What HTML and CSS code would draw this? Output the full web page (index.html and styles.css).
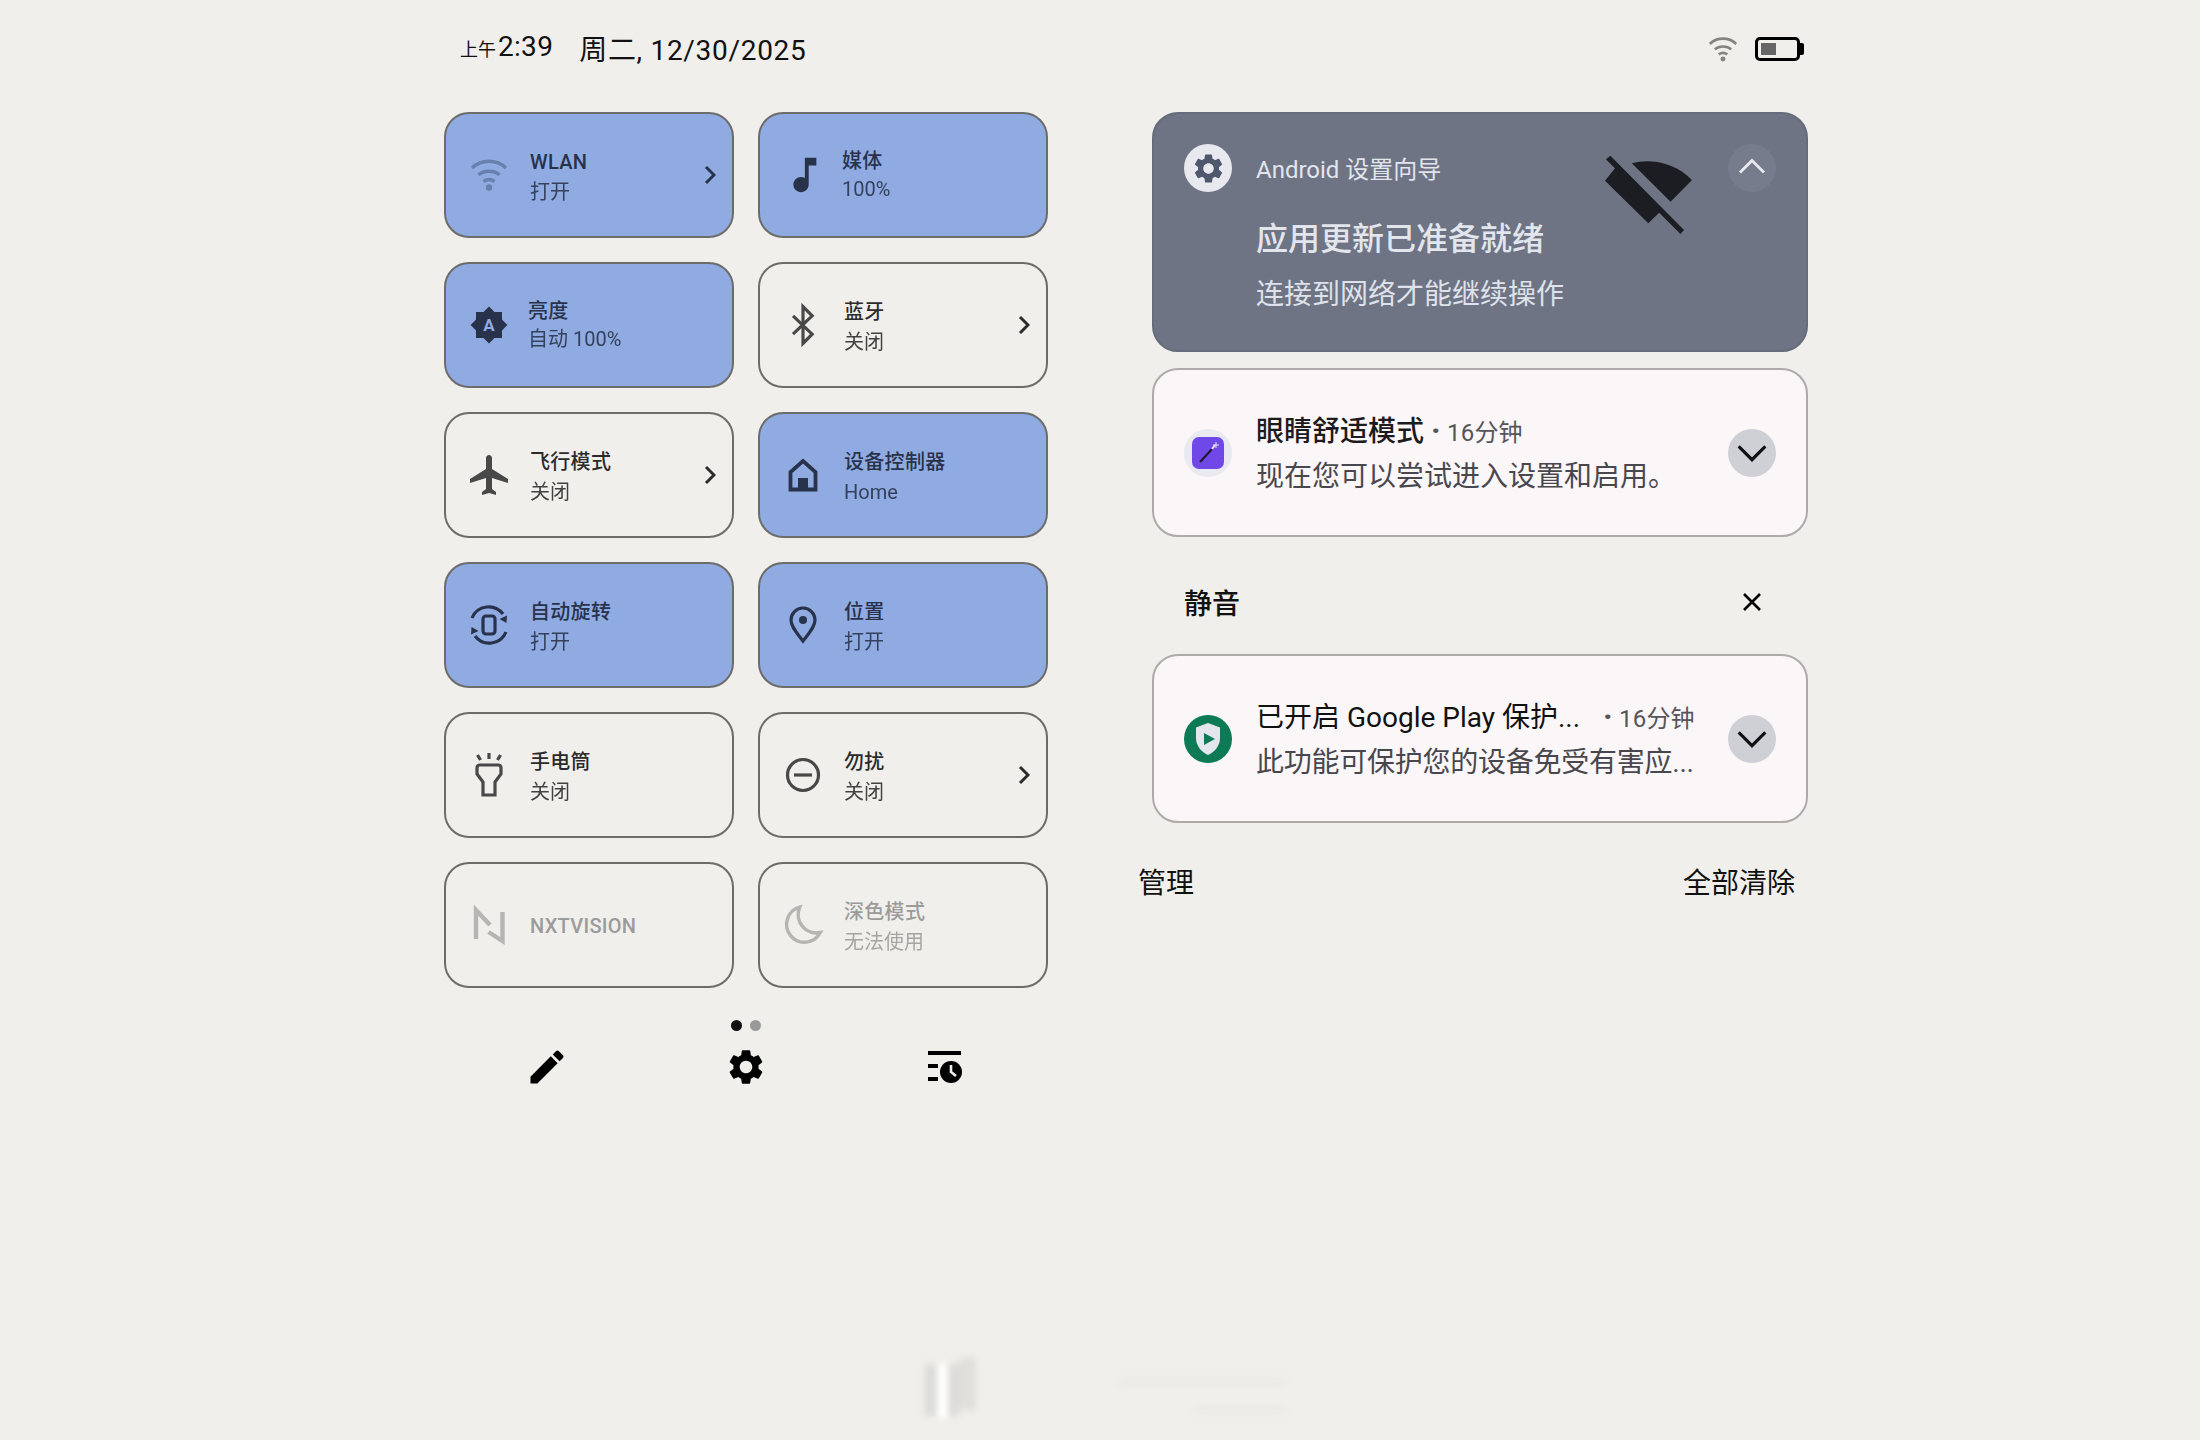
FILE: index.html
```html
<!DOCTYPE html>
<html lang="zh-CN">
<head>
    <meta charset="UTF-8">
    <meta name="viewport" content="width=device-width, initial-scale=1.0">
    <link rel="stylesheet" href="styles.css">
    <title>快速设置</title>
</head>
<body>

<svg class="defs" width="0" height="0">
    <defs>
        <path id="gear" d="M19.14 12.94c.04-.3.06-.61.06-.94 0-.32-.02-.64-.07-.94l2.03-1.58c.18-.14.23-.41.12-.61l-1.92-3.32c-.12-.22-.37-.29-.59-.22l-2.39.96c-.5-.38-1.03-.7-1.62-.94l-.36-2.54c-.04-.24-.24-.41-.48-.41h-3.84c-.24 0-.43.17-.47.41l-.36 2.54c-.59.24-1.13.57-1.62.94l-2.39-.96c-.22-.08-.47 0-.59.22L2.74 8.87c-.12.21-.08.47.12.61l2.03 1.58c-.05.3-.09.63-.09.94s.02.64.07.94l-2.03 1.58c-.18.14-.23.41-.12.61l1.92 3.32c.12.22.37.29.59.22l2.39-.96c.5.38 1.03.7 1.62.94l.36 2.54c.05.24.24.41.48.41h3.84c.24 0 .44-.17.47-.41l.36-2.54c.59-.24 1.13-.56 1.62-.94l2.39.96c.22.08.47 0 .59-.22l1.92-3.32c.12-.22.07-.47-.12-.61l-2.01-1.58zM12 15.6c-1.98 0-3.6-1.62-3.6-3.6s1.62-3.6 3.6-3.6 3.6 1.62 3.6 3.6-1.62 3.6-3.6 3.6z"/>
        <g id="wifi">
            <path d="M1 10C10.500 1 25.500 1 35 10"/>
            <path d="M7.500 17C13 12 23 12 28.500 17"/>
            <path d="M12.500 23.500C16 21 20 21 23.500 23.500"/>
            <circle cx="18" cy="29.500" r="3.200" fill="currentColor" stroke="none"/>
        </g>
    </defs>
</svg>

<div class="screen">
    <header class="status">
        <div class="clock">
            <span class="clock-ampm">上午</span><span class="clock-time">2:39</span>
            <span class="clock-date">周二, 12/30/2025</span>
        </div>
        <div class="status-icons">
            <svg class="status-wifi" viewBox="0 0 36 33"><use href="#wifi"/></svg>
            <div class="battery"><div class="battery-level"></div></div>
        </div>
    </header>

    <main class="columns">
        <section class="qs">
            <div class="tiles">
                <div class="tile on">
                    <svg class="tile-icon wifi-dim" viewBox="-2 -3 40 40"><use href="#wifi"/></svg>
                    <div class="tile-text"><div class="tile-title">WLAN</div><div class="tile-sub">打开</div></div>
                    <svg class="tile-more" viewBox="0 0 12 20"><path d="M2 2l8 8-8 8"/></svg>
                </div>
                <div class="tile on tight">
                    <svg class="tile-icon" viewBox="0.6 1.56 20.87 20.87"><path class="solid" d="M12 3v10.55c-.59-.34-1.27-.55-2-.55-2.21 0-4 1.79-4 4s1.79 4 4 4 4-1.79 4-4V7h4V3h-6z"/></svg>
                    <div class="tile-text"><div class="tile-title">媒体</div><div class="tile-sub">100%</div></div>
                </div>
                <div class="tile on tight">
                    <svg class="tile-icon" viewBox="0 0 40 40">
                        <rect class="solid" x="7" y="7" width="26" height="26"/>
                        <rect class="solid" x="7" y="7" width="26" height="26" transform="rotate(45 20 20)"/>
                        <text class="auto-a" x="20" y="26" text-anchor="middle">A</text>
                    </svg>
                    <div class="tile-text"><div class="tile-title">亮度</div><div class="tile-sub">自动 100%</div></div>
                </div>
                <div class="tile">
                    <svg class="tile-icon" viewBox="0 0 24 24"><path class="line" d="M6 6.5l11.5 11L12 23V1l5.500 5.500L6 17.500"/></svg>
                    <div class="tile-text"><div class="tile-title">蓝牙</div><div class="tile-sub">关闭</div></div>
                    <svg class="tile-more" viewBox="0 0 12 20"><path d="M2 2l8 8-8 8"/></svg>
                </div>
                <div class="tile">
                    <svg class="tile-icon" viewBox="1.500 2 20 20"><path class="solid" d="M21 16v-2l-8-5V3.500c0-.83-.67-1.500-1.500-1.500S10 2.670 10 3.500V9l-8 5v2l8-2.500V19l-2 1.500V22l3.500-1 3.500 1v-1.500L13 19v-5.500l8 2.500z"/></svg>
                    <div class="tile-text"><div class="tile-title">飞行模式</div><div class="tile-sub">关闭</div></div>
                    <svg class="tile-more" viewBox="0 0 12 20"><path d="M2 2l8 8-8 8"/></svg>
                </div>
                <div class="tile on">
                    <svg class="tile-icon" viewBox="0 0 40 40">
                        <path class="line home-line" d="M7.500 34.500V17L20 6l12.500 11v17.500z"/>
                        <rect class="solid" x="15" y="23" width="10" height="11"/>
                    </svg>
                    <div class="tile-text"><div class="tile-title">设备控制器</div><div class="tile-sub">Home</div></div>
                </div>
                <div class="tile on">
                    <svg class="tile-icon" viewBox="0 0 40 40">
                        <rect class="line" x="14" y="11" width="12" height="18" rx="3"/>
                        <path class="line" d="M3 13A18 18 0 0 1 34 9"/>
                        <path class="solid" d="M38 10.500L37.500 18l-7-4z"/>
                        <g transform="rotate(180 20 20)">
                            <path class="line" d="M3 13A18 18 0 0 1 34 9"/>
                            <path class="solid" d="M38 10.500L37.500 18l-7-4z"/>
                        </g>
                    </svg>
                    <div class="tile-text"><div class="tile-title">自动旋转</div><div class="tile-sub">打开</div></div>
                </div>
                <div class="tile on">
                    <svg class="tile-icon" viewBox="0 0 40 40">
                        <path class="line" d="M20 36C14 28 8 22 8 15a12 12 0 0 1 24 0c0 7-6 13-12 21z"/>
                        <circle class="solid" cx="20" cy="15" r="4"/>
                    </svg>
                    <div class="tile-text"><div class="tile-title">位置</div><div class="tile-sub">打开</div></div>
                </div>
                <div class="tile">
                    <svg class="tile-icon" viewBox="0 0 40 40">
                        <path class="line" d="M8 13q0-3 3-3h18q3 0 3 3v6l-6 8v13H14V27l-6-8z"/>
                        <path class="line" d="M20 -2v6M8.500 0l3 5M31.500 0l-3 5"/>
                    </svg>
                    <div class="tile-text"><div class="tile-title">手电筒</div><div class="tile-sub">关闭</div></div>
                </div>
                <div class="tile">
                    <svg class="tile-icon" viewBox="0 0 40 40">
                        <circle class="line" cx="20" cy="20" r="15.500"/>
                        <path class="line" d="M11 20h18"/>
                    </svg>
                    <div class="tile-text"><div class="tile-title">勿扰</div><div class="tile-sub">关闭</div></div>
                    <svg class="tile-more" viewBox="0 0 12 20"><path d="M2 2l8 8-8 8"/></svg>
                </div>
                <div class="tile off">
                    <svg class="tile-icon" viewBox="0 0 40 40">
                        <path class="line n-line" d="M7 34V5l14 15M33.500 7v29l-14-9"/>
                    </svg>
                    <div class="tile-text single"><div class="tile-title">NXTVISION</div></div>
                </div>
                <div class="tile off">
                    <svg class="tile-icon" viewBox="2.500 1.500 37 37">
                        <path class="line" d="M18 3.500A16.500 16.500 0 1 0 37 27 17 17 0 0 1 18 3.500z"/>
                    </svg>
                    <div class="tile-text"><div class="tile-title">深色模式</div><div class="tile-sub">无法使用</div></div>
                </div>
            </div>

            <div class="pager"><span class="dot active"></span><span class="dot"></span></div>

            <div class="qs-actions">
                <svg class="qs-action" viewBox="0 0 24 24"><path d="M3 17.250V21h3.750L17.810 9.940l-3.750-3.750L3 17.250zM20.710 7.040c.39-.39.39-1.020 0-1.410l-2.340-2.340c-.39-.39-1.020-.39-1.410 0l-1.830 1.830 3.750 3.750 1.830-1.830z"/></svg>
                <svg class="qs-action gear-action" viewBox="0 0 24 24"><use href="#gear"/></svg>
                <svg class="qs-action history-action" viewBox="0 0 36 36">
                    <path d="M1 2h33v4H1zM1 15h10v4H1zM1 28h10v4H1z"/>
                    <circle cx="24" cy="23" r="11"/>
                    <path class="clock-hands" d="M24 16v7l5 4"/>
                </svg>
            </div>
        </section>

        <section class="notifications">
            <article class="notif notif-alert">
                <div class="app-icon alert-icon"><svg viewBox="0 0 24 24"><use href="#gear"/></svg></div>
                <div class="alert-body">
                    <div class="alert-app">Android 设置向导</div>
                    <div class="alert-title">应用更新已准备就绪</div>
                    <div class="alert-text">连接到网络才能继续操作</div>
                </div>
                <div class="expand expand-up"><svg viewBox="0 0 24 24"><path d="M4 15l8-8 8 8"/></svg></div>
                <svg class="no-wifi" viewBox="0 0 88 80">
                    <path d="M5.400 .7L79 75l-3.600 4L.9 4.300z"/>
                    <path d="M11 12L0 25.700l43.300 42.600L56 56z"/>
                    <path d="M26.800 8.300C44 3 70 7 87 25L65.600 46.700z"/>
                </svg>
            </article>

            <article class="notif">
                <div class="app-icon eye-icon">
                    <svg viewBox="0 0 48 48">
                        <rect x="8" y="8" width="32" height="32" rx="7" fill="#7148e8"/>
                        <path d="M16 33l12-13" stroke="#1d1a33" stroke-width="2.200"/>
                        <path d="M28 20l3-4" stroke="#e8e2fb" stroke-width="2"/>
                        <path d="M32 13v6M29 16h6" stroke="#e8e2fb" stroke-width="1"/>
                    </svg>
                </div>
                <div class="notif-body">
                    <div class="notif-head"><span class="notif-title">眼睛舒适模式</span><span class="notif-time"><b>·</b> 16分钟</span></div>
                    <div class="notif-text">现在您可以尝试进入设置和启用。</div>
                </div>
                <div class="expand"><svg viewBox="0 0 24 24"><path d="M4 8l8 8 8-8"/></svg></div>
            </article>

            <div class="section-head">
                <span class="section-name">静音</span>
                <svg class="section-close" viewBox="0 0 18 18"><path d="M1 1l16 16M17 1L1 17"/></svg>
            </div>

            <article class="notif">
                <div class="app-icon play-icon">
                    <svg viewBox="0 0 48 48">
                        <path d="M24 8l12 4.500V23c0 8-5.500 14-12 17-6.500-3-12-9-12-17V12.500z" fill="#e4e6ee"/>
                        <path d="M20 18l11 6-11 6z" fill="#0b7a55"/>
                    </svg>
                </div>
                <div class="notif-body">
                    <div class="notif-head"><span class="notif-title clipped">已开启 Google Play 保护...</span><span class="notif-time"><b>·</b> 16分钟</span></div>
                    <div class="notif-text clipped-text">此功能可保护您的设备免受有害应...</div>
                </div>
                <div class="expand"><svg viewBox="0 0 24 24"><path d="M4 8l8 8 8-8"/></svg></div>
            </article>

            <div class="notif-actions">
                <span>管理</span>
                <span>全部清除</span>
            </div>
        </section>
    </main>

    <!-- smudge at the bottom of the capture -->
    <div class="smudge">
        <div class="smudge-band"></div>
        <div class="smudge-band second"></div>
        <div class="smudge-strip"></div>
        <div class="smudge-line"></div>
        <div class="smudge-line lower"></div>
    </div>
</div>

</body>
</html>
```

FILE: styles.css
```css
* {
    box-sizing: border-box;
}

body {
    margin: 0;
    background-color: #f0efeb;
    font-family: Roboto, "Noto Sans CJK SC", sans-serif;
    color: #111;
}

.defs {
    display: block;
}

.screen {
    position: relative;
    width: 2200px;
    height: 1440px;
    padding: 0 392px 0 444px;
    overflow: hidden;
}

/* status bar */
.status {
    height: 112px;
    display: flex;
    justify-content: space-between;
    align-items: flex-start;
    padding: 30px 8px 0 16px;
}

.clock {
    display: flex;
    align-items: flex-start;
}

.clock-ampm {
    font-size: 18px;
    line-height: 34px;
    margin-top: 3px;
}

.clock-time {
    font-size: 28px;
    line-height: 34px;
    margin-left: 2px;
    letter-spacing: .3px;
}

.clock-date {
    font-size: 28px;
    line-height: 34px;
    margin-left: 26px;
    margin-top: 4px;
    letter-spacing: .7px;
}

.status-icons {
    display: flex;
    align-items: center;
    gap: 18px;
    margin-top: 6px;
}

.status-wifi {
    width: 28px;
    height: 26px;
    fill: none;
    color: #85857f;
    stroke: #85857f;
    stroke-width: 3.400;
}

.battery {
    position: relative;
    width: 45px;
    height: 24px;
    border: 3px solid #000;
    border-radius: 5px;
    padding: 3px;
}

.battery::after {
    content: "";
    position: absolute;
    right: -7px;
    top: 3px;
    width: 4px;
    height: 12px;
    background-color: #000;
    border-radius: 0 2px 2px 0;
}

.battery-level {
    width: 15px;
    height: 100%;
    background-color: #666;
}

.columns {
    display: flex;
    gap: 104px;
}

/* quick settings */
.qs {
    width: 604px;
}

.tiles {
    display: grid;
    grid-template-columns: 290px 290px;
    grid-auto-rows: 126px;
    column-gap: 24px;
    row-gap: 24px;
}

.tile {
    display: flex;
    align-items: center;
    gap: 21px;
    padding: 0 16px 0 23px;
    border: 2px solid #6c6c6a;
    border-radius: 25px;
    color: #2b2b2b;
    --icon: #484848;
}

.tile.on {
    background-color: #8fabe2;
    color: #28324a;
    --icon: #28324a;
}

.tile.off {
    color: #9b9b9b;
    --icon: #b5b5b3;
}

.tile-icon {
    flex: none;
    width: 40px;
    height: 40px;
    overflow: visible;
}

.solid {
    fill: var(--icon);
}

.line {
    fill: none;
    stroke: var(--icon);
    stroke-width: 3.200;
}

.tile-icon[viewBox="0 0 24 24"] .line {
    stroke-width: 1.900;
}

.home-line {
    stroke-width: 3.800;
}

.n-line {
    stroke-width: 4.400;
}

.wifi-dim {
    fill: none;
    color: #6780ad;
    stroke: #6780ad;
    stroke-width: 3.400;
}

.auto-a {
    font-size: 17px;
    font-weight: 700;
    fill: #8fabe2;
}

.tile-text {
    flex: 1;
    padding-top: 3px;
    font-size: 20px;
    line-height: 30px;
}

.tile-text.single {
    padding-top: 1px;
}

.tight {
    gap: 19px;
}

.tight .tile-text {
    padding-top: 1px;
    margin-bottom: 2px;
    line-height: 28px;
}

.tile-title {
    font-weight: 500;
    letter-spacing: .3px;
}

.tile-sub {
    opacity: .88;
}

.tile-more {
    flex: none;
    width: 12px;
    height: 20px;
    fill: none;
    stroke: currentColor;
    stroke-width: 3;
}

.pager {
    display: flex;
    justify-content: center;
    gap: 8px;
    margin-top: 32px;
}

.dot {
    width: 11px;
    height: 11px;
    border-radius: 50%;
    background-color: #999;
}

.dot.active {
    background-color: #111;
}

.qs-actions {
    display: grid;
    grid-template-columns: repeat(3, 199px);
    justify-content: center;
    justify-items: center;
    align-items: center;
    margin-top: 14px;
}

.qs-action {
    width: 44px;
    height: 44px;
    fill: #000;
}

.gear-action {
    width: 42px;
    height: 42px;
}

.history-action {
    width: 36px;
    height: 36px;
}

.clock-hands {
    fill: none;
    stroke: #f0efeb;
    stroke-width: 2.600;
}

/* notifications */
.notifications {
    width: 656px;
}

.notif {
    position: relative;
    display: flex;
    align-items: center;
    gap: 24px;
    height: 169px;
    padding: 0 30px;
    background-color: #fbf6f7;
    border: 2px solid #aeaaaa;
    border-radius: 26px;
}

.notif-alert {
    height: 240px;
    margin-bottom: 16px;
    align-items: flex-start;
    padding-top: 30px;
    background-color: #6e7484;
    border-color: #666c7c;
    color: #e3e5ec;
}

.app-icon {
    flex: none;
    width: 48px;
    height: 48px;
    border-radius: 50%;
    display: flex;
}

.app-icon svg {
    width: 100%;
    height: 100%;
    fill: none;
}

.alert-icon {
    background-color: #e8e9ef;
    align-items: center;
    justify-content: center;
}

.alert-icon svg {
    width: 35px;
    height: 35px;
}

.alert-icon use {
    fill: #4f576c;
}

.eye-icon {
    background-color: #e9e9f1;
}

.play-icon {
    background-color: #0b7a55;
}

.alert-body,
.notif-body {
    flex: 1;
    min-width: 0;
}

.notif-body {
    padding-top: 4px;
}

.alert-app {
    margin-top: 2px;
    font-size: 24px;
    line-height: 48px;
}

.alert-title {
    margin-top: 22px;
    font-size: 32px;
    font-weight: 500;
    line-height: 46px;
}

.alert-text {
    margin-top: 11px;
    font-size: 28px;
    line-height: 44px;
    color: #dfe2ea;
}

.notif-head {
    display: flex;
    align-items: baseline;
    white-space: nowrap;
}

.notif-title {
    font-size: 28px;
    font-weight: 500;
    line-height: 42px;
    color: #1c1b20;
}

.notif-title.clipped {
    width: 340px;
    font-weight: 400;
    color: #111;
}

.notif-time {
    margin-left: 7px;
    font-size: 24px;
    line-height: 42px;
    letter-spacing: .2px;
    color: #55555a;
}

.notif-time b {
    font-size: 32px;
    line-height: 1;
}

.notif-text {
    margin-top: 2px;
    font-size: 28px;
    line-height: 42px;
    color: #49474e;
    white-space: nowrap;
}

.clipped-text {
    letter-spacing: -.25px;
}

.expand {
    flex: none;
    width: 48px;
    height: 48px;
    border-radius: 50%;
    background-color: #cfcfd6;
    display: flex;
    align-items: center;
    justify-content: center;
}

.expand svg {
    flex: none;
    width: 40px;
    height: 40px;
    fill: none;
    stroke: #111;
    stroke-width: 1.900;
}

.expand-up {
    background-color: #777c8c;
}

.expand-up svg {
    width: 36px;
    height: 36px;
    stroke: #e8e9ef;
}

.no-wifi {
    position: absolute;
    left: 451px;
    top: 41px;
    width: 88px;
    height: 80px;
    fill: #1c1d22;
}

.section-head {
    height: 117px;
    padding: 12px 47px 0 32px;
    display: flex;
    justify-content: space-between;
    align-items: center;
}

.section-name {
    font-size: 28px;
    font-weight: 500;
}

.section-close {
    width: 18px;
    height: 18px;
    fill: none;
    stroke: #000;
    stroke-width: 2.600;
}

.notif-actions {
    display: flex;
    justify-content: space-between;
    margin: 0 13px 0 -14px;
    padding-top: 39px;
    font-size: 28px;
    line-height: 44px;
}

/* smudge */
.smudge {
    position: absolute;
    left: 923px;
    top: 1358px;
    width: 362px;
    height: 60px;
    filter: blur(3px);
}

.smudge-band {
    position: absolute;
    left: 2px;
    top: 6px;
    width: 34px;
    height: 52px;
    background-color: #dcdbd7;
}

.smudge-strip {
    position: absolute;
    left: 14px;
    top: 6px;
    width: 11px;
    height: 54px;
    background-color: #fff;
}

.smudge-band.second {
    left: 36px;
    top: 0;
    width: 17px;
    height: 52px;
    background-color: #e0dfdb;
}

.smudge-line {
    position: absolute;
    right: 0;
    top: 22px;
    width: 165px;
    height: 4px;
    background-color: #e6e5e1;
}

.smudge-line.lower {
    top: 50px;
    width: 90px;
}
```
